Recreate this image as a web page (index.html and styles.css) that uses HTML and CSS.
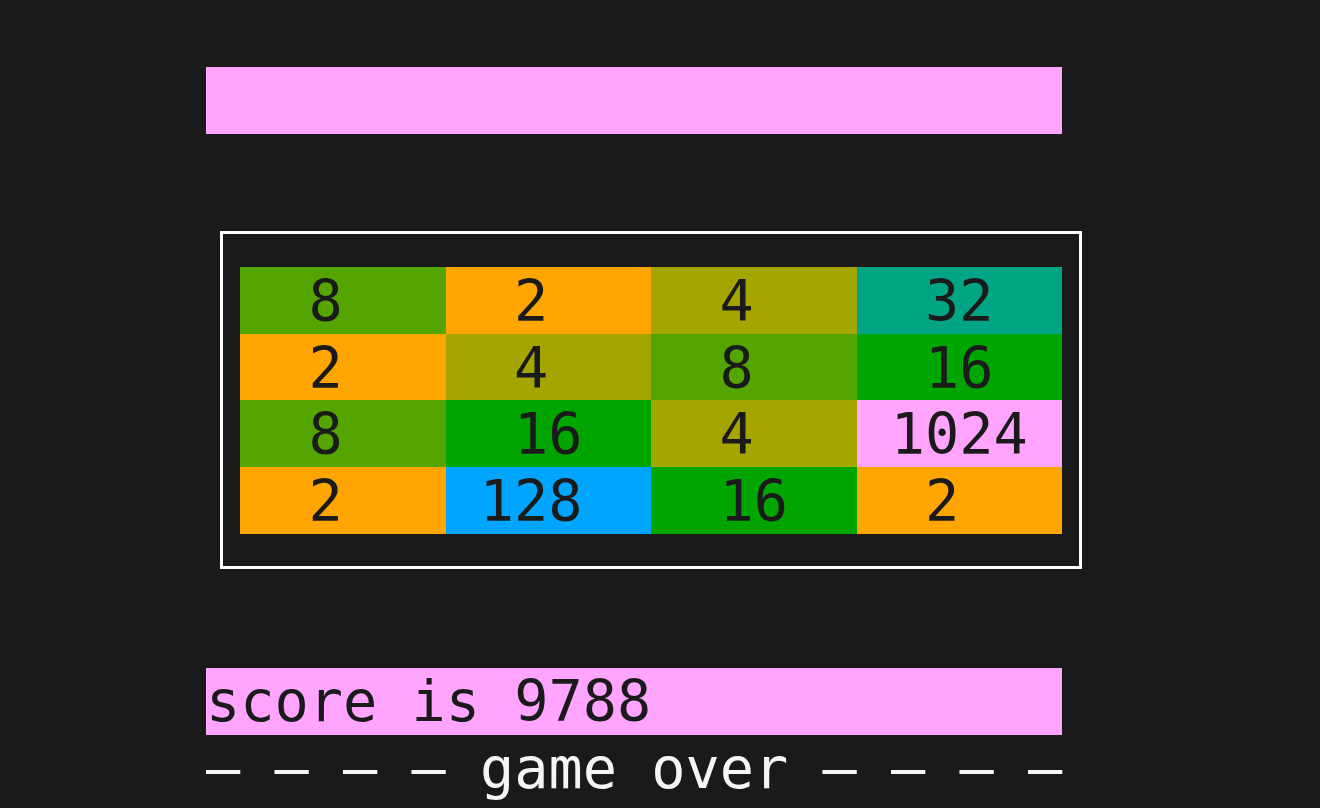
FILE: index.html
```html
<!DOCTYPE html>
<html>
<head>
<meta charset="utf-8">
<link rel="stylesheet" href="styles.css">
</head>
<body>
<div class="screen">
  <div class="bar"></div>
  <div class="board">
    <div class="grid">
      <div class="tile c8">  8   </div>
      <div class="tile c2">  2   </div>
      <div class="tile c4">  4   </div>
      <div class="tile c32">  32  </div>
      <div class="tile c2">  2   </div>
      <div class="tile c4">  4   </div>
      <div class="tile c8">  8   </div>
      <div class="tile c16">  16  </div>
      <div class="tile c8">  8   </div>
      <div class="tile c16">  16  </div>
      <div class="tile c4">  4   </div>
      <div class="tile c1024"> 1024 </div>
      <div class="tile c2">  2   </div>
      <div class="tile c128"> 128  </div>
      <div class="tile c16">  16  </div>
      <div class="tile c2">  2   </div>
    </div>
  </div>
  <div class="bar score">score is 9788</div>
  <div class="over">– – – – game over – – – –</div>
</div>
</body>
</html>
```
FILE: styles.css
```css
html, body {
  margin: 0;
  padding: 0;
  background: #1a1a1a;
  height: 100%;
  overflow: hidden;
}
.screen {
  padding: 67px 0 0 206px;
  font-family: "DejaVu Sans Mono", monospace;
  font-size: 56.9px;
  line-height: 66.8px;
  color: #1a1a1a;
}
.bar {
  width: 856px;
  height: 66.8px;
  background: #ffa5ff;
  white-space: pre;
}
.board {
  box-sizing: border-box;
  margin: 97px 0 0 14px;
  width: 862px;
  height: 338px;
  border: 3px solid #ffffff;
  padding: 33px 17px 32px 17px;
}
.grid {
  display: grid;
  grid-template-columns: repeat(4, 1fr);
  grid-auto-rows: 66.8px;
}
.tile {
  white-space: pre;
  padding-top: 1px;
  box-sizing: border-box;
}
.c2 { background: #ffa500; }
.c4 { background: #a5a500; }
.c8 { background: #55a500; }
.c16 { background: #00a500; }
.c32 { background: #00a585; }
.c128 { background: #00a5ff; }
.c1024 { background: #ffa5ff; }
.score {
  margin-top: 99px;
}
.over {
  color: #f5f5f5;
  white-space: pre;
}
```
